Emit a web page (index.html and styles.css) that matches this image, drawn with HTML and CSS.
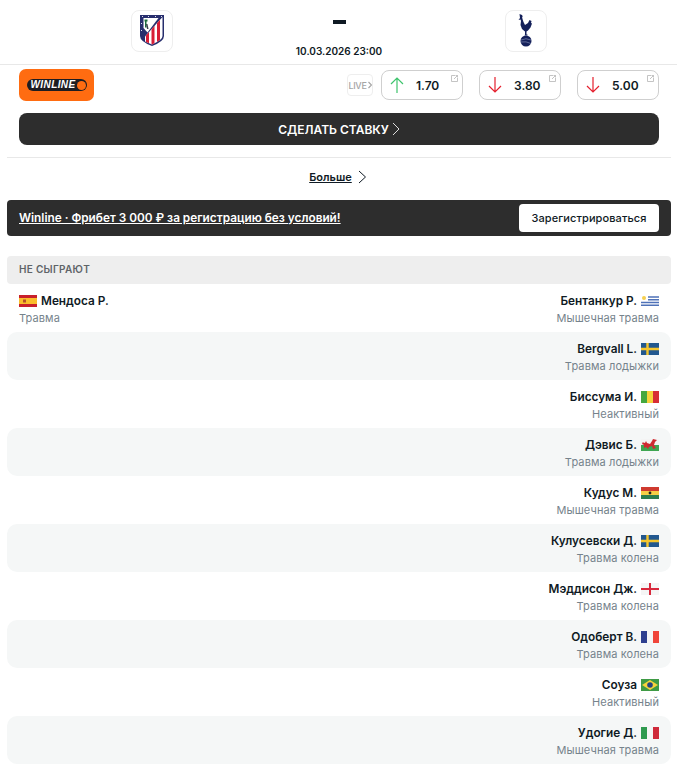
FILE: index.html
```html
<!DOCTYPE html>
<html lang="ru">

<head>
    <meta charset="UTF-8">
    <meta name="viewport" content="width=device-width, initial-scale=1.0">
    <title>Атлетико - Тоттенхэм</title>
    <link rel="stylesheet" href="styles.css">
</head>

<body>
    <header class="match-head">
        <div class="team-logo">
            <svg width="24" height="31" viewBox="0 0 24 31">
                <defs>
                    <clipPath id="shield-stripes"><path d="M22.500 2V21Q22.500 25 12 29.500L5 26.500V21.500Z"/></clipPath>
                </defs>
                <path d="M0 0H24V21Q24 26.500 12 31Q0 26.500 0 21Z" fill="#272e6d"/>
                <g clip-path="url(#shield-stripes)">
                    <rect width="24" height="31" fill="#fff"/>
                    <path d="M6 0h3v31H6zM11.500 0h3v31h-3zM17 0h3v31h-3z" fill="#d81e36"/>
                </g>
                <path d="M3.500 3H18.500L7.500 17.500L3.500 13Z" fill="#fff"/>
                <path d="M4.500 4.500h3v2h-1v6h-1.500v-6h-.5z" fill="#1a6a3c"/>
                <path d="M6 9h1.500l1 5H7z" fill="#3a3f4a"/>
                <path d="M2 1.500h1M8 1.500h1M15 1.500h1M21 1.500h1M1.500 8v1M1.500 15v1" stroke="#dfe2f0" stroke-width="1"/>
            </svg>
        </div>
        <div class="score">
            <div class="score-dash"></div>
            <div class="match-date">10.03.2026 23:00</div>
        </div>
        <div class="team-logo">
            <svg width="16" height="33" viewBox="0 0 16 33">
                <path d="M1.500 0l2.500 1 1 2-1-.5.5 2.500 1 3 1.500 3 3-2 1.500-3 2 1-.5 2 1 .5-1.500 4-2.500 3-1.500 1v3h1v1H6.500l.500-1v-3L4 15 2.500 11l.5-4-.5-1.500L.5 6l1.500-2z" fill="#14205a"/>
                <circle cx="8" cy="27" r="5.500" fill="#14205a"/>
                <path d="M3 26q5-2.500 10 0M3 28q5-1 10 1.500" stroke="#7f8ab0" stroke-width=".7" fill="none"/>
            </svg>
        </div>
    </header>

    <section class="bets">
        <div class="bets-row">
            <div class="bookmaker">
                <div class="winline">
                    <div class="winline-pill">
                        <span class="winline-name">WINLINE</span>
                        <span class="winline-dot"></span>
                    </div>
                </div>
            </div>
            <div class="live-box">LIVE<svg width="4" height="8" viewBox="0 0 4 8"><path d="M.5 1l3 3-3 3" stroke="#a5a5a5" stroke-width="1.200" fill="none"/></svg></div>
            <div class="odds">
                <a class="odd">
                    <svg class="odd-arrow" width="16" height="18" viewBox="0 0 16 18"><path d="M8 17V2M2 8l6-6 6 6" stroke="#3ec46d" stroke-width="1.200" fill="none"/></svg>
                    <span class="odd-value">1.70</span>
                    <svg class="odd-ext" width="7" height="7" viewBox="0 0 7 7"><path d="M4 .5H.5v6h6V3M3 4L6.500.5M4.500.5h2v2" stroke="#b5b5b5" stroke-width=".8" fill="none"/></svg>
                </a>
                <a class="odd">
                    <svg class="odd-arrow" width="16" height="18" viewBox="0 0 16 18"><path d="M8 1v15M2 10l6 6 6-6" stroke="#e5202e" stroke-width="1.200" fill="none"/></svg>
                    <span class="odd-value">3.80</span>
                    <svg class="odd-ext" width="7" height="7" viewBox="0 0 7 7"><path d="M4 .5H.5v6h6V3M3 4L6.500.5M4.500.5h2v2" stroke="#b5b5b5" stroke-width=".8" fill="none"/></svg>
                </a>
                <a class="odd">
                    <svg class="odd-arrow" width="16" height="18" viewBox="0 0 16 18"><path d="M8 1v15M2 10l6 6 6-6" stroke="#e5202e" stroke-width="1.200" fill="none"/></svg>
                    <span class="odd-value">5.00</span>
                    <svg class="odd-ext" width="7" height="7" viewBox="0 0 7 7"><path d="M4 .5H.5v6h6V3M3 4L6.500.5M4.500.5h2v2" stroke="#b5b5b5" stroke-width=".8" fill="none"/></svg>
                </a>
            </div>
        </div>
        <a class="bet-button">СДЕЛАТЬ СТАВКУ
            <svg width="8" height="14" viewBox="0 0 8 14"><path d="M1 1l6 6-6 6" stroke="#ddd" stroke-width="1" fill="none"/></svg>
        </a>
    </section>

    <div class="more-row">
        <a class="more-link">Больше</a>
        <svg width="9" height="14" viewBox="0 0 9 14"><path d="M1 1l6.500 6L1 13" stroke="#0f1a24" stroke-width="1" fill="none"/></svg>
    </div>

    <div class="promo">
        <a class="promo-text">Winline · Фрибет 3 000 ₽ за регистрацию без условий!</a>
        <a class="promo-button">Зарегистрироваться</a>
    </div>

    <h3 class="section-title">НЕ СЫГРАЮТ</h3>

    <div class="missing">
        <div class="missing-row">
            <div class="player">
                <div class="player-name">
                    <svg class="flag" viewBox="0 0 18 12"><rect width="18" height="12" fill="#c8202c"/><rect y="3" width="18" height="6" fill="#fabd2c"/><rect x="4" y="4.500" width="3" height="3" fill="#b5502a"/></svg>
                    Мендоса Р.
                </div>
                <div class="player-note">Травма</div>
            </div>
            <div class="player right">
                <div class="player-name">
                    Бентанкур Р.
                    <svg class="flag" viewBox="0 0 18 12"><rect width="18" height="12" fill="#fff"/><path d="M7 2h11M7 4.700h11M0 7.400h18M0 10.200h18" stroke="#4f72b8" stroke-width="1.500"/><circle cx="3" cy="3" r="2" fill="#f6cf4f"/></svg>
                </div>
                <div class="player-note">Мышечная травма</div>
            </div>
        </div>
        <div class="missing-row">
            <div class="player"></div>
            <div class="player right">
                <div class="player-name">
                    Bergvall L.
                    <svg class="flag" viewBox="0 0 18 12"><rect width="18" height="12" fill="#22588f"/><path d="M0 6h18M6.500 0v12" stroke="#f5c62e" stroke-width="2.400"/></svg>
                </div>
                <div class="player-note">Травма лодыжки</div>
            </div>
        </div>
        <div class="missing-row">
            <div class="player"></div>
            <div class="player right">
                <div class="player-name">
                    Биссума И.
                    <svg class="flag" viewBox="0 0 18 12"><rect width="6" height="12" fill="#45a83f"/><rect x="6" width="6" height="12" fill="#f6d33c"/><rect x="12" width="6" height="12" fill="#d72e35"/></svg>
                </div>
                <div class="player-note">Неактивный</div>
            </div>
        </div>
        <div class="missing-row">
            <div class="player"></div>
            <div class="player right">
                <div class="player-name">
                    Дэвис Б.
                    <svg class="flag" viewBox="0 0 18 12"><rect width="18" height="6" fill="#f4f4f4"/><rect y="6" width="18" height="6" fill="#3fa652"/><path d="M1 3l3 1 1-2 1 2 3 1 2-3 1-2 4 1-2 2-1 3 2 3-3 1-1-3-3 1-1 2-2-2-2 1 0-3-2-1 1-2z" fill="#cf2a30"/></svg>
                </div>
                <div class="player-note">Травма лодыжки</div>
            </div>
        </div>
        <div class="missing-row">
            <div class="player"></div>
            <div class="player right">
                <div class="player-name">
                    Кудус М.
                    <svg class="flag" viewBox="0 0 18 12"><rect width="18" height="4" fill="#cf3a2f"/><rect y="4" width="18" height="4" fill="#f6cf46"/><rect y="8" width="18" height="4" fill="#2d7d4f"/><circle cx="9" cy="6" r="1.400" fill="#222"/></svg>
                </div>
                <div class="player-note">Мышечная травма</div>
            </div>
        </div>
        <div class="missing-row">
            <div class="player"></div>
            <div class="player right">
                <div class="player-name">
                    Кулусевски Д.
                    <svg class="flag" viewBox="0 0 18 12"><rect width="18" height="12" fill="#22588f"/><path d="M0 6h18M6.500 0v12" stroke="#f5c62e" stroke-width="2.400"/></svg>
                </div>
                <div class="player-note">Травма колена</div>
            </div>
        </div>
        <div class="missing-row">
            <div class="player"></div>
            <div class="player right">
                <div class="player-name">
                    Мэддисон Дж.
                    <svg class="flag" viewBox="0 0 18 12"><rect width="18" height="12" fill="#f5f5f5"/><path d="M0 6h18M9 0v12" stroke="#d8283c" stroke-width="2"/></svg>
                </div>
                <div class="player-note">Травма колена</div>
            </div>
        </div>
        <div class="missing-row">
            <div class="player"></div>
            <div class="player right">
                <div class="player-name">
                    Одоберт В.
                    <svg class="flag" viewBox="0 0 18 12"><rect width="6" height="12" fill="#2e3f8f"/><rect x="6" width="6" height="12" fill="#f5f5f5"/><rect x="12" width="6" height="12" fill="#f0453a"/></svg>
                </div>
                <div class="player-note">Травма колена</div>
            </div>
        </div>
        <div class="missing-row">
            <div class="player"></div>
            <div class="player right">
                <div class="player-name">
                    Соуза
                    <svg class="flag" viewBox="0 0 18 12"><rect width="18" height="12" fill="#3f9b45"/><path d="M9 1l8 5-8 5-8-5z" fill="#f6d33c"/><circle cx="9" cy="6" r="2.800" fill="#27467f"/></svg>
                </div>
                <div class="player-note">Неактивный</div>
            </div>
        </div>
        <div class="missing-row">
            <div class="player"></div>
            <div class="player right">
                <div class="player-name">
                    Удогие Д.
                    <svg class="flag" viewBox="0 0 18 12"><rect width="6" height="12" fill="#2f9a4f"/><rect x="6" width="6" height="12" fill="#f5f5f5"/><rect x="12" width="6" height="12" fill="#cf2a3a"/></svg>
                </div>
                <div class="player-note">Мышечная травма</div>
            </div>
        </div>
    </div>
</body>

</html>
```

FILE: styles.css
```css
body {
    margin: 0;
    height: 775px;
    overflow: hidden;
    background-color: #fff;
    color: #0f1a24;
    font-family: Inter, "Noto Sans", sans-serif;
}

a {
    color: inherit;
}

.match-head {
    display: grid;
    grid-template-columns: 42px 1fr 42px;
    align-items: center;
    height: 64px;
    padding: 0 130px 0 131px;
    border-bottom: 1px solid #e8e8e8;
}

.team-logo {
    display: flex;
    align-items: center;
    justify-content: center;
    width: 40px;
    height: 40px;
    margin-bottom: 3px;
    border: 1px solid #eee;
    border-radius: 8px;
}

.score {
    display: flex;
    flex-direction: column;
    align-items: center;
    height: 64px;
}

.score-dash {
    width: 13px;
    height: 4px;
    margin-top: 20px;
    background-color: #0f1a24;
}

.match-date {
    margin-top: 20px;
    font-size: 10px;
    line-height: 14px;
    font-weight: 600;
}

.bets {
    margin: 0 6px 0 7px;
    padding: 4px 12px 12px;
    border-bottom: 1px solid #e8e8e8;
}

.bets-row {
    display: flex;
    align-items: center;
    height: 32px;
}

.bookmaker {
    flex: 1;
}

.winline {
    display: flex;
    align-items: center;
    justify-content: center;
    width: 75px;
    height: 32px;
    border-radius: 7px;
    background-color: #ff6c11;
}

.winline-pill {
    display: flex;
    align-items: center;
    justify-content: space-between;
    box-sizing: border-box;
    width: 60px;
    height: 12px;
    padding: 0 1px 0 4px;
    border-radius: 6px;
    background-color: #1d1d22;
}

.winline-name {
    color: #fff;
    font-family: "Liberation Sans", sans-serif;
    font-size: 10px;
    line-height: 12px;
    font-weight: 700;
    font-style: italic;
    letter-spacing: .4px;
}

.winline-dot {
    width: 9px;
    height: 9px;
    border-radius: 50%;
    background-color: #ff6c11;
}

.live-box {
    display: flex;
    align-items: center;
    justify-content: center;
    gap: 1px;
    box-sizing: border-box;
    width: 26px;
    height: 22px;
    margin-right: 8px;
    border: 1px solid #eee;
    border-radius: 4px;
    color: #a5a5a5;
    font-size: 9px;
    font-weight: 500;
    letter-spacing: -.3px;
}

.odds {
    display: flex;
    gap: 16px;
}

.odd {
    position: relative;
    display: flex;
    align-items: center;
    box-sizing: border-box;
    width: 82px;
    height: 30px;
    padding-left: 7px;
    border: 1px solid #cfcfcf;
    border-radius: 8px;
}

.odd-value {
    margin-left: 11px;
    font-size: 12px;
    font-weight: 600;
}

.odd-ext {
    position: absolute;
    top: 4px;
    right: 4px;
}

.bet-button {
    display: flex;
    align-items: center;
    justify-content: center;
    gap: 3px;
    height: 32px;
    margin-top: 12px;
    border-radius: 8px;
    background-color: #2d2d2d;
    color: #fff;
    font-size: 12px;
    font-weight: 600;
}

.more-row {
    display: flex;
    align-items: center;
    justify-content: center;
    gap: 6px;
    height: 38px;
    padding-bottom: 4px;
}

.more-link {
    margin-left: -1px;
    font-size: 11px;
    font-weight: 600;
    text-decoration: underline;
}

.promo {
    display: flex;
    align-items: center;
    justify-content: space-between;
    height: 36px;
    margin: 0 6px 0 7px;
    padding: 0 12px;
    border-radius: 4px;
    background-color: #2d2d2d;
}

.promo-text {
    color: #fff;
    font-size: 11.800px;
    font-weight: 600;
    text-decoration: underline;
}

.promo-button {
    display: flex;
    align-items: center;
    justify-content: center;
    width: 140px;
    height: 28px;
    border-radius: 4px;
    background-color: #fff;
    font-size: 11px;
    font-weight: 500;
    letter-spacing: .1px;
}

.section-title {
    height: 28px;
    margin: 20px 6px 0 7px;
    padding: 0 12px;
    border-radius: 4px;
    background-color: #eee;
    color: #5f6468;
    font-size: 10px;
    line-height: 27px;
    font-weight: 600;
    letter-spacing: .3px;
}

.missing {
    margin: 0 6px 0 7px;
}

.missing-row {
    display: flex;
    justify-content: space-between;
    box-sizing: border-box;
    height: 48px;
    padding: 9px 12px 0;
    border-radius: 10px;
}

.missing-row:nth-child(even) {
    background-color: #f5f7f7;
}

.player-name {
    display: flex;
    align-items: center;
    gap: 4px;
    height: 16px;
    font-size: 11.800px;
    font-weight: 600;
}

.player-note {
    margin-top: 3px;
    color: #76838c;
    font-size: 11px;
    line-height: 13px;
    letter-spacing: .1px;
}

.player.right {
    text-align: right;
}

.player.right .player-name {
    justify-content: flex-end;
}

.flag {
    width: 18px;
    height: 12px;
}
```
